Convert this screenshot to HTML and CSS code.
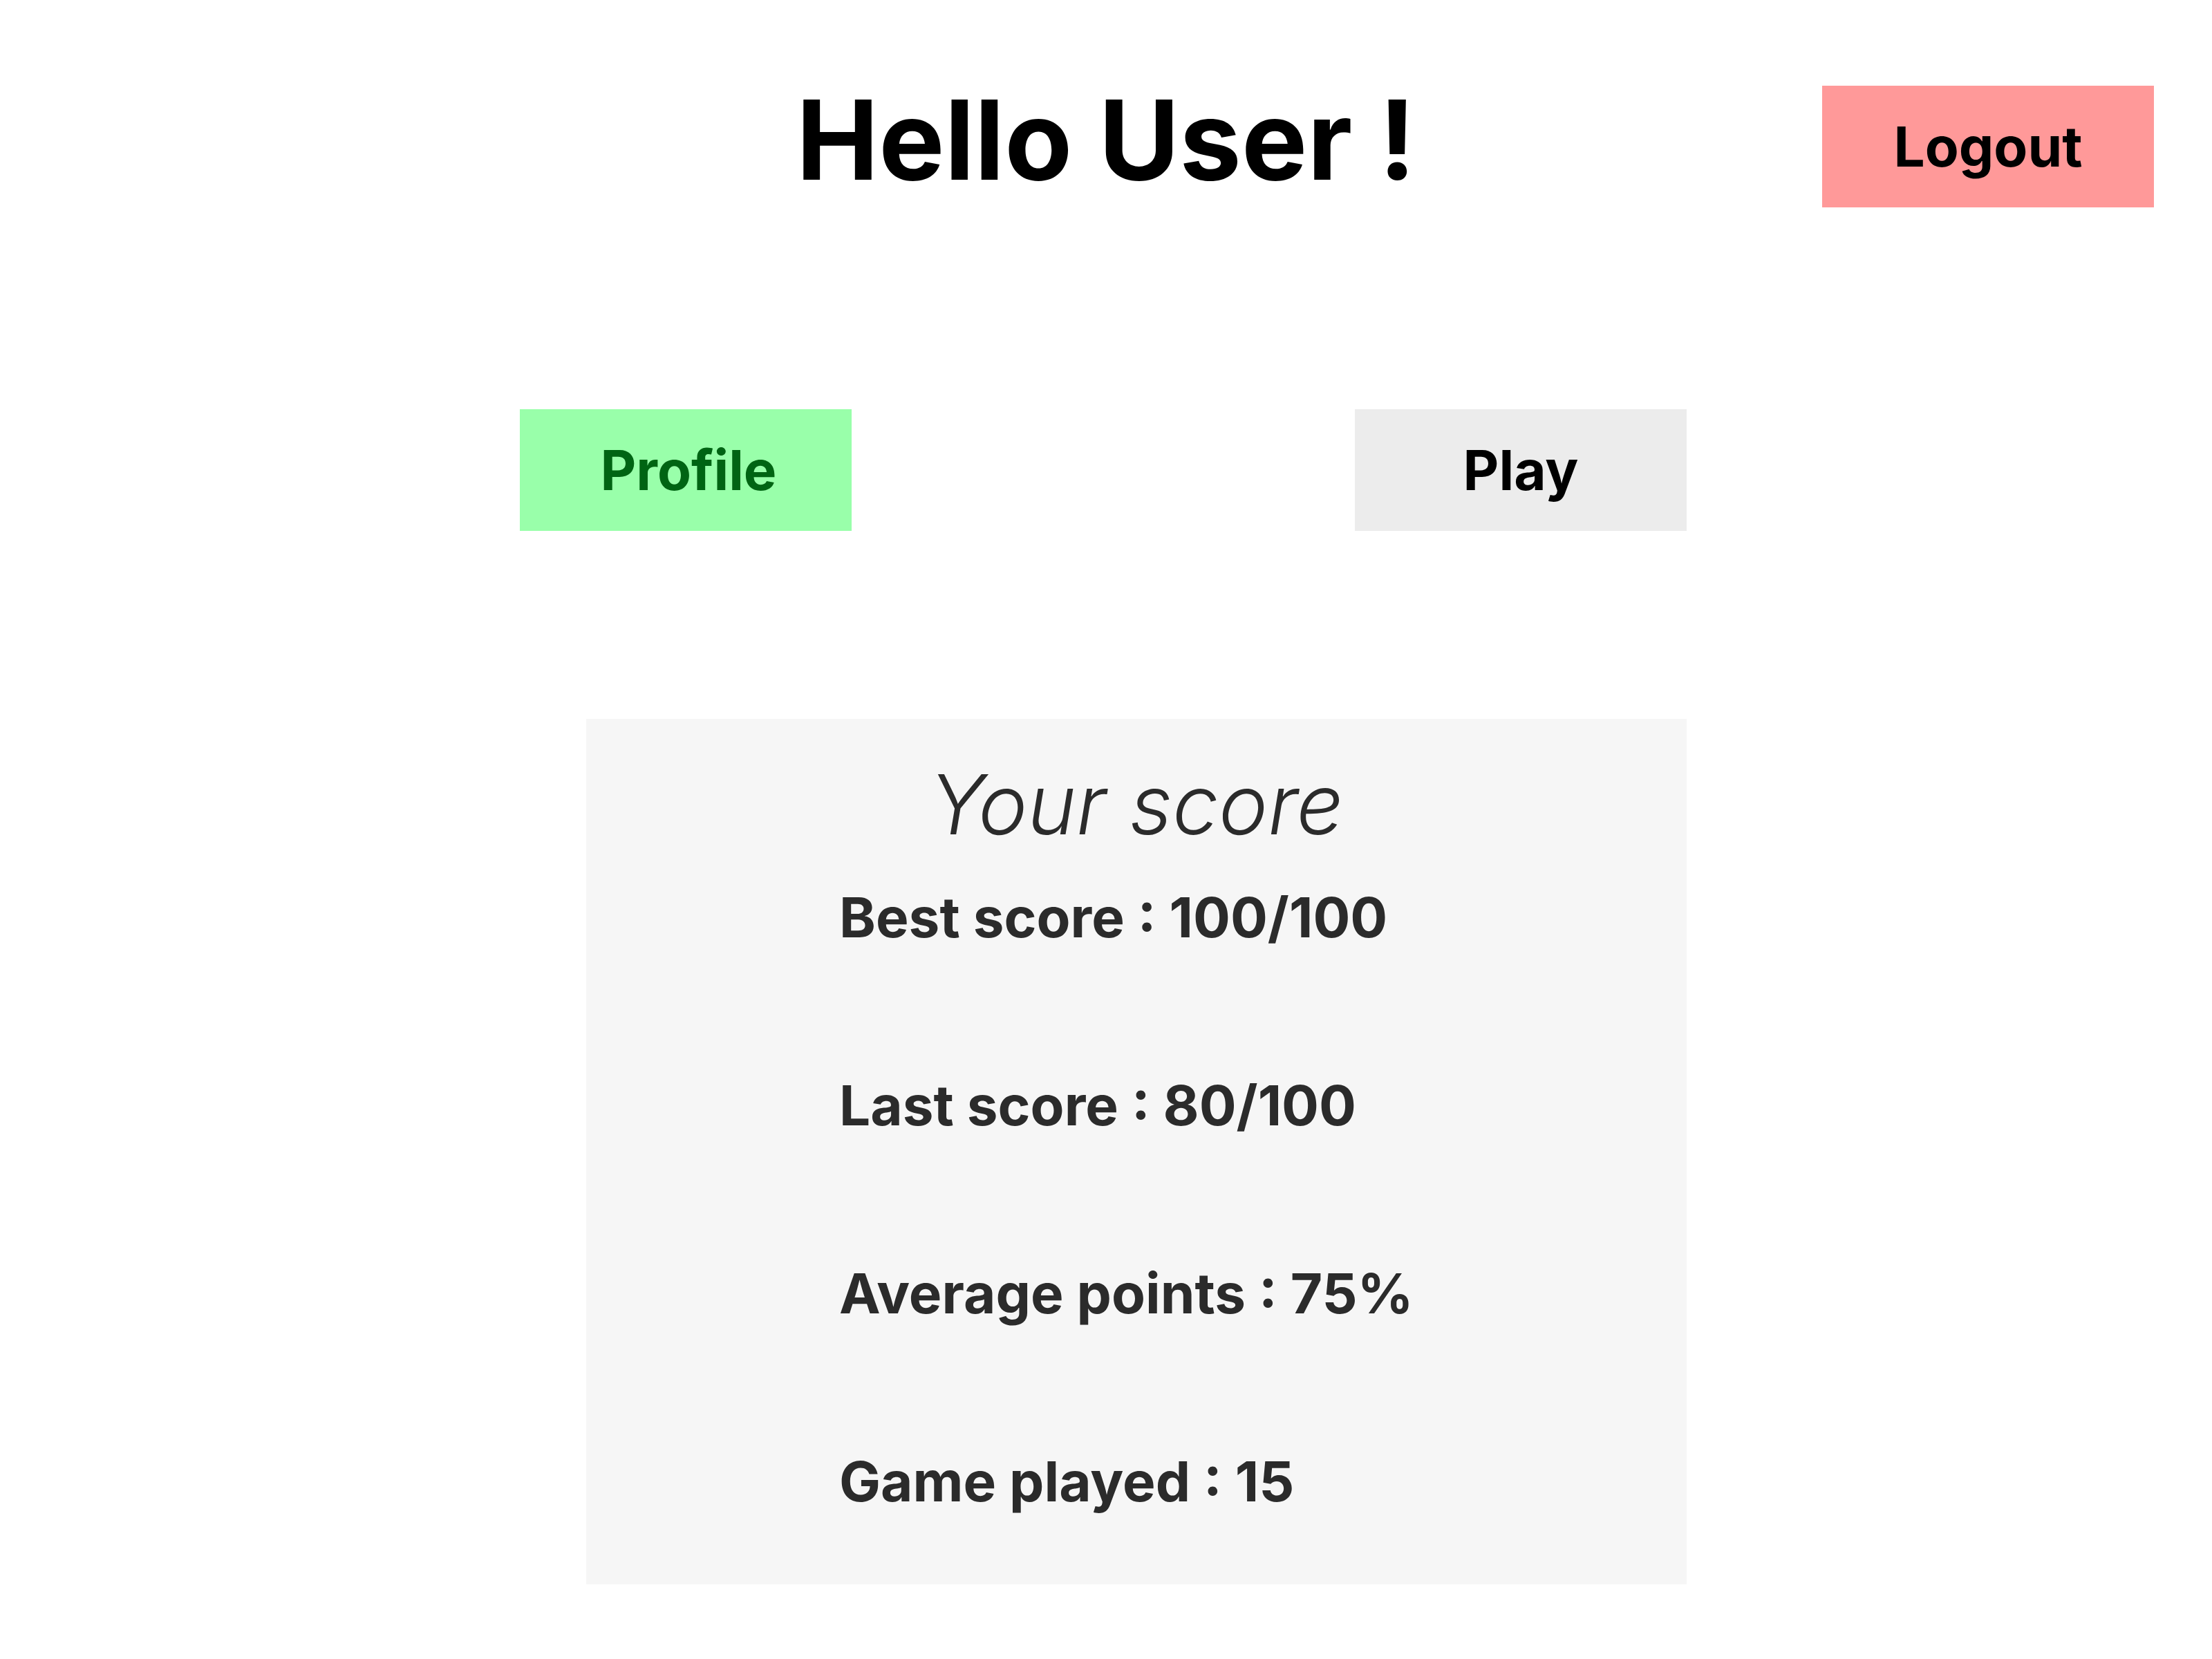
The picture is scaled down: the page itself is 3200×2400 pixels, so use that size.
FILE: index.html
```html
<!DOCTYPE html>
<html lang="en">
<head>
<meta charset="utf-8">
<title>Hello User</title>
<link rel="stylesheet" href="styles.css">
</head>
<body>
<header class="header">
  <h1 class="title">Hello User !</h1>
  <button class="btn btn-logout">Logout</button>
</header>
<nav class="nav">
  <button class="btn btn-profile">Profile</button>
  <button class="btn btn-play">Play</button>
</nav>
<section class="score-card">
  <h2 class="score-title">Your score</h2>
  <ul class="score-list">
    <li>Best score : 100/100</li>
    <li>Last score : 80/100</li>
    <li>Average points : 75%</li>
    <li>Game played : 15</li>
  </ul>
</section>
</body>
</html>
```
FILE: styles.css
```css
html, body {
  margin: 0;
  padding: 0;
  background: #ffffff;
}
body {
  font-family: Inter, "Noto Sans", sans-serif;
  width: 3200px;
  min-height: 2400px;
}
.header {
  position: relative;
  padding-top: 122px;
}
.title {
  margin: 0;
  text-align: center;
  font-size: 160px;
  line-height: 1;
  font-weight: 700;
  color: #000;
}
.btn {
  border: 0;
  margin: 0;
  padding: 0;
  width: 480px;
  height: 176px;
  font-family: Inter, "Noto Sans", sans-serif;
  font-size: 80px;
  line-height: 1;
  font-weight: 700;
  display: flex;
  align-items: center;
  justify-content: center;
  color: #000;
}
.btn-logout {
  position: absolute;
  top: 124px;
  right: 84px;
  background: #ff9999;
}
.nav {
  margin-top: 310px;
  margin-left: 752px;
  width: 1688px;
  display: flex;
  justify-content: space-between;
}
.btn-profile {
  background: #99ffaa;
  color: #006413;
  padding-left: 8px;
}
.btn-play {
  background: #ececec;
}
.score-card {
  margin-top: 272px;
  margin-left: 848px;
  width: 1592px;
  box-sizing: border-box;
  background: #f6f6f6;
  padding: 64px 0 109px 0;
  color: #2b2b2b;
}
.score-title {
  margin: 0;
  text-align: center;
  font-size: 120px;
  line-height: 1;
  font-weight: 300;
  font-style: italic;
}
.score-list {
  list-style: none;
  margin: 63px 0 0 0;
  padding: 0 0 0 366px;
  display: flex;
  flex-direction: column;
  gap: 192px;
}
.score-list li {
  font-size: 80px;
  line-height: 1;
  font-weight: 700;
}
```
